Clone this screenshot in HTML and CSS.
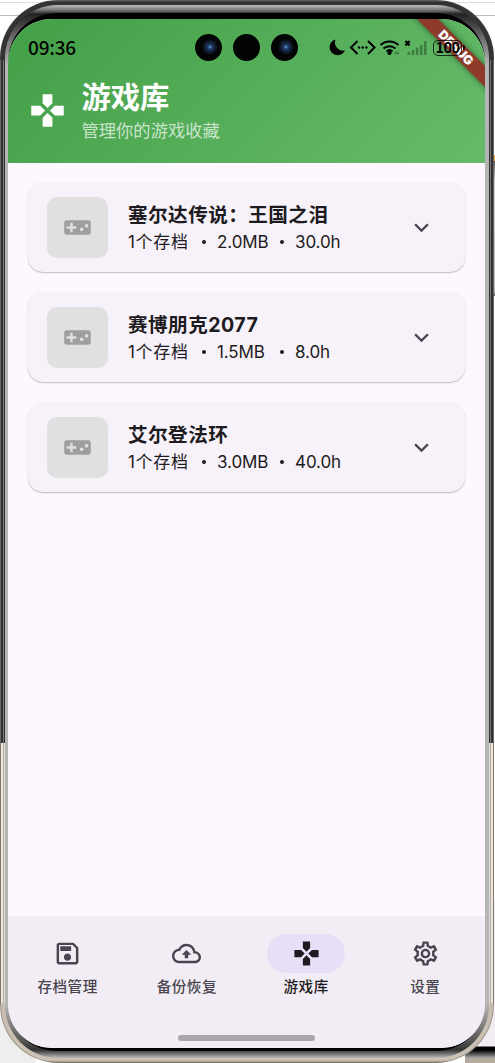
FILE: index.html
```
<!DOCTYPE html>
<html lang="zh-CN">
	<head>
		<meta charset="utf-8">
		<meta name="viewport" content="width=device-width, initial-scale=1">
		<title>游戏库</title>
		<link rel="stylesheet" href="styles.css">
	</head>
	<body>
		<svg class="symbols" width="0" height="0">
			<symbol id="gamepad" viewBox="0 0 24 24"><path d="M15 7.5V2H9v5.5l3 3 3-3zM7.5 9H2v6h5.5l3-3-3-3zM9 16.5V22h6v-5.5l-3-3-3 3zM16.5 9l-3 3 3 3H22V9h-5.5z"/></symbol>
			<symbol id="console" viewBox="0 0 24 24"><path d="M21 6H3c-1.1 0-2 .9-2 2v8c0 1.1.9 2 2 2h18c1.1 0 2-.9 2-2V8c0-1.1-.9-2-2-2zm-10 7H8v3H6v-3H3v-2h3V8h2v3h3v2zm4.5 2c-.83 0-1.5-.67-1.5-1.5s.67-1.5 1.5-1.5 1.5.67 1.5 1.5-.67 1.5-1.5 1.5zm4-3c-.83 0-1.5-.67-1.5-1.5S18.67 9 19.5 9s1.5.67 1.5 1.5-.67 1.5-1.5 1.5z"/></symbol>
			<symbol id="expand" viewBox="0 0 24 24"><path d="M16.59 8.59L12 13.17 7.41 8.59 6 10l6 6 6-6z"/></symbol>
		</svg>

		<div class="phone">
			<div class="bezel">
				<div class="glass">
					<div class="screen">
						<div class="debug-banner">DEBUG</div>
						<header class="header">
							<div class="status-bar">
								<span class="clock">09:36</span>
								<div class="cameras">
									<span class="camera camera-lens"></span>
									<span class="camera"></span>
									<span class="camera camera-lens"></span>
								</div>
								<svg class="status-icons" width="100" height="20" viewBox="0 0 100 20">
									<path d="M7.500 1.500A8 8 0 1 0 17 12.300 8 8 0 0 1 7.500 1.500z"/>
									<g class="line">
										<path d="M29.500 3L23 9.500l6.500 6.500M40 3l6.500 6.500L40 16"/>
										<path d="M52.500 7a13 13 0 0 1 18 0M55.500 10.500a9 9 0 0 1 12 0M58.500 13.500a4.500 4.500 0 0 1 6 0"/>
										<path d="M77.500 3l4 4.500M81.500 3l-4 4.500"/>
									</g>
									<circle cx="31" cy="9.500" r="1.200"/>
									<circle cx="34.700" cy="9.500" r="1.200"/>
									<circle cx="38.400" cy="9.500" r="1.200"/>
									<circle cx="61.500" cy="15" r="2.100"/>
									<path class="faded" d="M66 15l2.500-2v4zM71.500 15L69 13v4z"/>
									<path class="faded" d="M79.500 14h2.500v3h-2.500zM83.700 12h2.500v5h-2.500zM87.900 9.500h2.500V17h-2.500zM92 7h2.500v10H92zM96 3h2.500v14H96z"/>
								</svg>
								<span class="battery">100</span>
								<span class="battery-tip"></span>
							</div>
							<div class="header-main">
								<svg class="header-icon"><use href="#gamepad"/></svg>
								<div>
									<h1 class="header-title">游戏库</h1>
									<p class="header-subtitle">管理你的游戏收藏</p>
								</div>
							</div>
						</header>

						<main class="games">
							<div class="card">
								<div class="cover"><svg class="cover-icon"><use href="#console"/></svg></div>
								<div class="info">
									<h2 class="name">塞尔达传说：王国之泪</h2>
									<p class="meta"><span class="saves">1个存档</span><i class="dot"></i><span class="size">2.0MB</span><i class="dot"></i><span>30.0h</span></p>
								</div>
								<svg class="expand"><use href="#expand"/></svg>
							</div>
							<div class="card">
								<div class="cover"><svg class="cover-icon"><use href="#console"/></svg></div>
								<div class="info">
									<h2 class="name">赛博朋克2077</h2>
									<p class="meta"><span class="saves">1个存档</span><i class="dot"></i><span class="size">1.5MB</span><i class="dot"></i><span>8.0h</span></p>
								</div>
								<svg class="expand"><use href="#expand"/></svg>
							</div>
							<div class="card">
								<div class="cover"><svg class="cover-icon"><use href="#console"/></svg></div>
								<div class="info">
									<h2 class="name">艾尔登法环</h2>
									<p class="meta"><span class="saves">1个存档</span><i class="dot"></i><span class="size">3.0MB</span><i class="dot"></i><span>40.0h</span></p>
								</div>
								<svg class="expand"><use href="#expand"/></svg>
							</div>
						</main>

						<nav class="nav">
							<div class="nav-items">
								<div class="nav-item">
									<span class="pill"><svg class="nav-icon" viewBox="0 0 24 24"><path d="M17 3H5c-1.11 0-2 .9-2 2v14c0 1.1.89 2 2 2h14c1.1 0 2-.9 2-2V7l-4-4zm2 16H5V5h11.17L19 7.83V19zm-7-7c-1.66 0-3 1.34-3 3s1.34 3 3 3 3-1.34 3-3-1.34-3-3-3zM6 6h9v4H6z"/></svg></span>
									<span>存档管理</span>
								</div>
								<div class="nav-item">
									<span class="pill"><svg class="nav-icon" viewBox="0 0 24 24"><path d="M19.35 10.04C18.67 6.59 15.64 4 12 4 9.11 4 6.6 5.64 5.35 8.04 2.34 8.36 0 10.91 0 14c0 3.31 2.69 6 6 6h13c2.76 0 5-2.24 5-5 0-2.64-2.05-4.78-4.65-4.96zM19 18H6c-2.21 0-4-1.79-4-4 0-2.05 1.53-3.76 3.56-3.97l1.07-.11.5-.95C8.08 7.14 9.94 6 12 6c2.62 0 4.88 1.86 5.39 4.43l.3 1.5 1.53.11c1.56.1 2.78 1.41 2.78 2.96 0 1.65-1.35 3-3 3zM8 13h2.55v3h2.9v-3H16l-4-4z"/></svg></span>
									<span>备份恢复</span>
								</div>
								<div class="nav-item active">
									<span class="pill"><svg class="nav-icon"><use href="#gamepad"/></svg></span>
									<span>游戏库</span>
								</div>
								<div class="nav-item">
									<span class="pill"><svg class="nav-icon" viewBox="0 0 24 24"><path d="M19.43 12.98c.04-.32.07-.64.07-.98 0-.34-.03-.66-.07-.98l2.11-1.65c.19-.15.24-.42.12-.64l-2-3.46c-.09-.16-.26-.25-.44-.25-.06 0-.12.01-.17.03l-2.49 1c-.52-.4-1.08-.73-1.69-.98l-.38-2.65C14.46 2.18 14.25 2 14 2h-4c-.25 0-.46.18-.49.42l-.38 2.65c-.61.25-1.17.59-1.69.98l-2.49-1c-.06-.02-.12-.03-.18-.03-.17 0-.34.09-.43.25l-2 3.46c-.13.22-.07.49.12.64l2.11 1.65c-.04.32-.07.65-.07.98 0 .33.03.66.07.98l-2.11 1.65c-.19.15-.24.42-.12.64l2 3.46c.09.16.26.25.44.25.06 0 .12-.01.17-.03l2.49-1c.52.4 1.08.73 1.69.98l.38 2.65c.03.24.24.42.49.42h4c.25 0 .46-.18.49-.42l.38-2.65c.61-.25 1.17-.59 1.69-.98l2.49 1c.06.02.12.03.18.03.17 0 .34-.09.43-.25l2-3.46c.12-.22.07-.49-.12-.64l-2.11-1.65zm-1.98-1.71c.04.31.05.52.05.73 0 .21-.02.43-.05.73l-.14 1.13.89.7 1.08.84-.7 1.21-1.27-.51-1.04-.42-.9.68c-.43.32-.84.56-1.25.73l-1.06.43-.16 1.13-.2 1.35h-1.4l-.19-1.35-.16-1.13-1.06-.43c-.43-.18-.83-.41-1.23-.71l-.91-.7-1.06.43-1.27.51-.7-1.21 1.08-.84.89-.7-.14-1.13c-.03-.31-.05-.54-.05-.74s.02-.43.05-.73l.14-1.13-.89-.7-1.08-.84.7-1.21 1.27.51 1.04.42.9-.68c.43-.32.84-.56 1.25-.73l1.06-.43.16-1.13.2-1.35h1.39l.19 1.35.16 1.13 1.06.43c.43.18.83.41 1.23.71l.91.7 1.06-.43 1.27-.51.7 1.21-1.07.85-.89.7.14 1.13zM12 8c-2.21 0-4 1.79-4 4s1.79 4 4 4 4-1.79 4-4-1.79-4-4-4zm0 6c-1.1 0-2-.9-2-2s.9-2 2-2 2 .9 2 2-.9 2-2 2z"/></svg></span>
									<span>设置</span>
								</div>
							</div>
							<div class="home-handle"></div>
						</nav>
					</div>
				</div>
			</div>
		</div>
	</body>
</html>
```
FILE: styles.css
```
* {
	box-sizing: border-box;
}
body {
	margin: 0;
	height: 1063px;
	overflow: hidden;
	font-family: "Inter", "Noto Sans CJK SC", sans-serif;
	color: #1d1b20;
	/* window edges behind the phone */
	background:
		linear-gradient(#dedede, #dedede) 0 7px / 0 1px no-repeat,
		linear-gradient(#dedede, #dedede) 0 2px / 100% 1px no-repeat,
		linear-gradient(#bcbcbc, #bcbcbc) 0 15px / 100% 1px no-repeat,
		linear-gradient(#e9a020, #e9a020) 100% 155px / 2px 6px no-repeat,
		linear-gradient(#555, #ccc 20px, #bbb 130px, #444) 100% 161px / 1px 135px no-repeat,
		linear-gradient(#f1edf3 0 146px, #000 147px 150px, #aaa 158px, #b4ab9c 159px) 100% 900px / 30px 163px no-repeat,
		linear-gradient(#eee, #eee) 0 1000px / 36px 63px no-repeat,
		#fff;
}
h1, h2, p {
	margin: 0;
}
svg {
	display: block;
	fill: currentColor;
	flex: none;
}
.symbols {
	position: absolute;
}

/* phone body */
.phone {
	width: 494px;
	height: 1063px;
	padding: 5px;
	border-radius: 58px;
	background:
		linear-gradient(90deg, #777 0 1px, #333 1px 3px, #777 3px 4px, #333 4px 490px, #777 490px 491px, #333 491px 493px, #777 493px) 0 60px / 100% 683px no-repeat,
		linear-gradient(90deg, #9b9386 0 1px, #eee8dc 1px 3px, #b4ab9c 3px 4px, #ddd 4px 490px, #b4ab9c 490px 491px, #eee8dc 491px 493px, #9b9386 493px) 0 743px / 100% 260px no-repeat,
		linear-gradient(#777 0, #333 2px, #333 743px, #b4ab9c 743px, #cbc2b3 1060px, #8c8578 1063px);
	box-shadow: inset 0 0 0 1px rgba(80, 80, 80, .4);
}
.bezel {
	height: 1053px;
	padding: 8px 4px 7px 3px;
	border-radius: 53px;
	background: linear-gradient(#c0bcbc 0, #777 5px, #222 9px, #777 36px, #b5b5b5 60px, #b5b5b5 1000px, #555 1036px, #333 1045px, #bbb 1053px);
}
.glass {
	height: 1038px;
	padding: 6px 0 3px;
	border-radius: 49px;
	background: linear-gradient(#000 50px, #999 70px, #999 970px, #000 1000px);
}
.screen {
	position: relative;
	display: flex;
	flex-direction: column;
	height: 1029px;
	width: 477px;
	border-radius: 44px;
	overflow: hidden;
	background: #fef7ff;
}

/* header */
.header {
	height: 144px;
	background: linear-gradient(135deg, #43a047, #66bb6a);
	color: #fff;
}
.status-bar {
	position: relative;
	z-index: 2;
	display: flex;
	align-items: center;
	height: 57px;
	padding-left: 20px;
	color: #000;
}
.clock {
	width: 167px;
	padding-bottom: 2px;
	font-family: "Noto Sans CJK SC", sans-serif;
	font-size: 19px;
	font-weight: 500;
	line-height: 27px;
	letter-spacing: -.2px;
}
.cameras {
	display: flex;
	gap: 11px;
}
.camera {
	width: 27px;
	height: 27px;
	border-radius: 50%;
	background: #020303;
}
.camera-lens {
	background: radial-gradient(circle at 15px 13px, #6f9fd8 0, #203f70 2px, #111e35 5px, #0d1014 7px, #020303 8px);
}
.status-icons {
	margin-left: 30px;
}
.line {
	fill: none;
	stroke: #000;
	stroke-width: 2;
}
.faded {
	opacity: .3;
}
.battery {
	width: 29px;
	height: 16px;
	margin-left: 5px;
	border: 1.500px solid rgba(0, 0, 0, .75);
	border-radius: 5px;
	font-family: "Noto Sans CJK SC", sans-serif;
	font-size: 14.500px;
	font-weight: 700;
	line-height: 12px;
	text-align: center;
	letter-spacing: -.5px;
}
.battery-tip {
	width: 2px;
	height: 5px;
	margin-left: 1px;
	border-radius: 0 2px 2px 0;
	background: #000;
}
.debug-banner {
	position: absolute;
	z-index: 1;
	left: 388px;
	top: 21px;
	width: 120px;
	height: 15px;
	transform: rotate(45deg);
	background: #8e3b2c;
	box-shadow: 0 0 6px rgba(0, 0, 0, .45);
	color: #fff;
	font-size: 12.500px;
	font-weight: 900;
	line-height: 15px;
	text-align: center;
}
.header-main {
	display: flex;
	align-items: center;
	gap: 15px;
	padding-left: 19.500px;
	height: 68px;
}
.header-icon {
	width: 39px;
	height: 39px;
}
.header-title {
	font-size: 29.300px;
	line-height: 39px;
	font-weight: 700;
}
.header-subtitle {
	padding-top: 1px;
	font-size: 17.300px;
	line-height: 25px;
	color: rgba(255, 255, 255, .7);
}

/* game cards */
.games {
	flex: 1;
	display: flex;
	flex-direction: column;
	gap: 20px;
	padding: 19px 20px 19px 19.500px;
}
.card {
	display: flex;
	align-items: center;
	height: 90px;
	padding: 0 29.500px 0 19.500px;
	border-radius: 15px;
	background: #f7f2fa;
	box-shadow: 0 1px 1.500px rgba(0, 0, 0, .25);
}
.cover {
	display: grid;
	place-items: center;
	width: 61px;
	height: 61px;
	border-radius: 10px;
	background: #e0e0e0;
	color: #9e9e9e;
}
.cover-icon, .expand, .nav-icon {
	width: 29px;
	height: 29px;
}
.info {
	flex: 1;
	margin-left: 20px;
	padding-top: 2px;
}
.name {
	font-size: 19.600px;
	font-weight: 700;
	line-height: 28px;
	letter-spacing: .45px;
}
.meta {
	display: flex;
	align-items: center;
	font-size: 17px;
	line-height: 27px;
	letter-spacing: -.1px;
}
.saves {
	width: 61px;
	letter-spacing: .7px;
}
.dot {
	width: 4px;
	height: 4px;
	margin: 0 11px 0 13px;
	border-radius: 50%;
	background: #1d1b20;
}
.size {
	width: 50px;
	white-space: nowrap;
}
.expand {
	color: #49454f;
}

/* bottom navigation */
.nav {
	height: 132px;
	padding-top: 18px;
	background: #f2edf4;
}
.nav-items {
	display: flex;
}
.nav-item {
	flex: 1;
	display: flex;
	flex-direction: column;
	align-items: center;
	gap: 3px;
	font-size: 14.600px;
	font-weight: 500;
	line-height: 22px;
	letter-spacing: .5px;
	color: #49454f;
}
.pill {
	display: grid;
	place-items: center;
	width: 78px;
	height: 39px;
	border-radius: 20px;
}
.active {
	color: #1d1b20;
}
.active .pill {
	background: #e8def8;
}
.home-handle {
	width: 137px;
	height: 6px;
	margin: 37px auto 0;
	border-radius: 3px;
	background: #aaa6ac;
}
```
